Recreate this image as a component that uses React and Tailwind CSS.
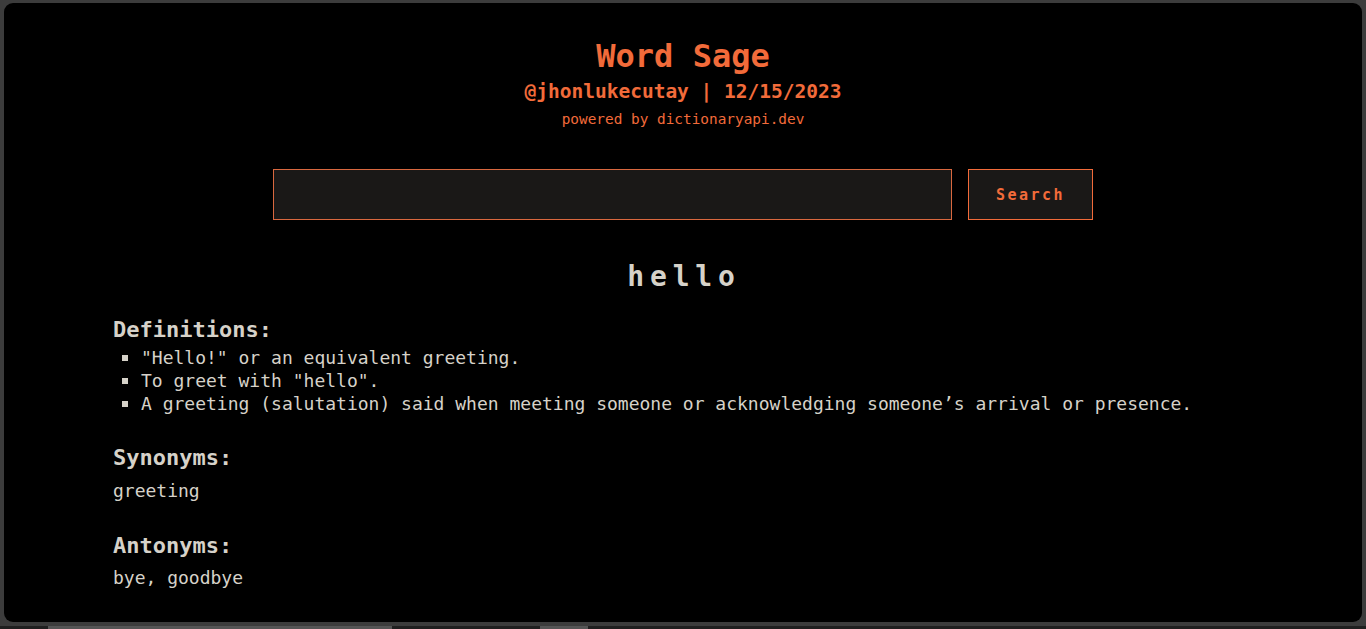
import React from "react";

const mono = { fontFamily: '"DejaVu Sans Mono", "Liberation Mono", monospace' };

export default function App() {
  const defs = [
    '"Hello!" or an equivalent greeting.',
    'To greet with "hello".',
    "A greeting (salutation) said when meeting someone or acknowledging someone’s arrival or presence.",
  ];
  return (
    <div className="w-[1366px] h-[629px] bg-[#3c3c3c] flex flex-col overflow-hidden" style={mono}>
      <div className="flex-1 pt-[3px] px-[4px] pb-[4px] flex">
        <div className="flex-1 bg-black rounded-[9px] flex flex-col">
          <div className="flex flex-col items-center pt-[33px]">
            <h1 className="text-[32px] leading-[40px] font-bold text-[#f26b3a]">Word Sage</h1>
            <div className="mt-[4px] text-[19.5px] leading-[24px] font-bold text-[#f26b3a]">@jhonlukecutay | 12/15/2023</div>
            <div className="mt-[6px] text-[14.4px] leading-[18px] text-[#f26b3a]">powered by dictionaryapi.dev</div>
            <div className="mt-[41px] flex gap-[16px]">
              <input
                className="w-[679px] h-[51px] bg-[#1a1817] border border-[#d9683f] outline-none px-3 text-[#d6d2c9] text-[18px]"
                style={mono}
              />
              <button
                className="w-[125px] h-[51px] pt-[2px] bg-[#1a1817] border border-[#f26b3a] text-[#f26b3a] text-[15px] font-bold tracking-[2.5px]"
                style={mono}
              >
                Search
              </button>
            </div>
            <h2 className="mt-[40px] text-[28px] leading-[34px] font-bold text-[#d6d2c9] tracking-[5.8px] pl-[2px]">hello</h2>
          </div>
          <div className="pl-[109px] text-[#d6d2c9]">
            <h3 className="mt-[22px] text-[22px] leading-[28px] font-bold">Definitions:</h3>
            <ul className="mt-[2px]">
              {defs.map((d, i) => (
                <li key={i} className="flex items-center text-[18px] leading-[23px]">
                  <span className="w-[6px] h-[6px] bg-[#d6d2c9] ml-[9px] mr-[13px] shrink-0" />
                  <span>{d}</span>
                </li>
              ))}
            </ul>
            <h3 className="mt-[29px] text-[22px] leading-[28px] font-bold">Synonyms:</h3>
            <div className="mt-[7px] text-[18px] leading-[23px]">greeting</div>
            <h3 className="mt-[30px] text-[22px] leading-[28px] font-bold">Antonyms:</h3>
            <div className="mt-[6px] text-[18px] leading-[23px]">bye, goodbye</div>
          </div>
        </div>
      </div>
      <div className="h-[3px] bg-[#1f1f1f] relative">
        <div className="absolute left-[48px] w-[344px] top-0 h-[3px] bg-[#555555]" />
        <div className="absolute left-[540px] w-[48px] top-0 h-[3px] bg-[#555555]" />
      </div>
    </div>
  );
}
